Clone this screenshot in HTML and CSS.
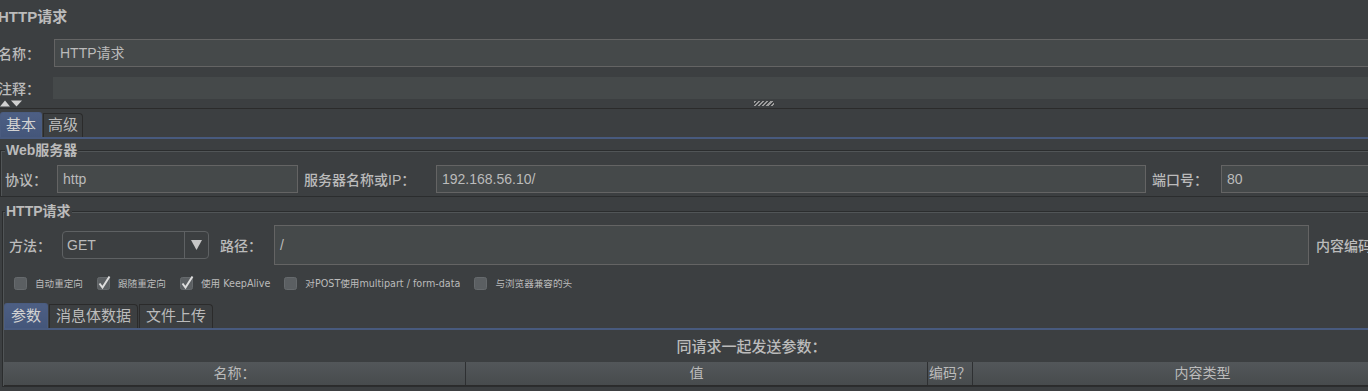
FILE: index.html
```html
<!DOCTYPE html>
<html lang="zh-CN">
<head>
    <meta charset="UTF-8">
    <title>HTTP请求</title>
    <link rel="stylesheet" href="styles.css">
</head>
<body>
<div class="app">
    <div class="page-title">HTTP请求</div>

    <div class="meta-row name-row">
        <label class="meta-label">名称：</label>
        <div class="field">HTTP请求</div>
    </div>
    <div class="meta-row comment-row">
        <label class="meta-label">注释：</label>
        <div class="comment-area"></div>
    </div>

    <!-- collapse arrows + splitter grip -->
    <div class="splitter">
        <svg class="collapse-arrows" width="22" height="7" viewBox="0 0 22 7">
            <polygon points="0,6.5 5,0.5 10,6.5" fill="#d0d0d0"/>
            <polygon points="11,0.5 22,0.5 16.5,6.5" fill="#d0d0d0"/>
        </svg>
        <span class="grip"></span>
    </div>

    <div class="tab-bar main-tabs">
        <span class="tab active">基本</span>
        <span class="tab">高级</span>
    </div>

    <fieldset class="group web-server">
        <legend>Web服务器</legend>
        <div class="server-row">
            <label class="lbl lbl-proto">协议：</label>
            <div class="field proto">http</div>
            <label class="lbl lbl-host">服务器名称或IP：</label>
            <div class="field host">192.168.56.10/</div>
            <label class="lbl lbl-port">端口号：</label>
            <div class="field port">80</div>
        </div>
    </fieldset>

    <fieldset class="group http-req">
        <legend>HTTP请求</legend>
        <div class="request-row">
            <label class="lbl lbl-method">方法：</label>
            <div class="select">
                <span class="select-value">GET</span>
                <span class="select-arrow">
                    <svg width="11" height="10" viewBox="0 0 11 10"><polygon points="0,0 11,0 5.5,10" fill="#c6c6c6"/></svg>
                </span>
            </div>
            <label class="lbl lbl-path">路径：</label>
            <div class="field path">/</div>
            <label class="lbl lbl-enc">内容编码：</label>
            <div class="field enc"></div>
        </div>

        <div class="options">
            <span class="option">
                <svg class="check" width="13" height="13" viewBox="0 0 13 13"><rect x="0.5" y="0.5" width="12" height="12" rx="2" fill="#5b5f62" stroke="#666a6d"/></svg>
                自动重定向
            </span>
            <span class="option">
                <svg class="check" width="13" height="13" viewBox="0 0 13 13"><rect x="0.5" y="0.5" width="12" height="12" rx="2" fill="#5b5f62" stroke="#666a6d"/><path d="M2.5 6.5 L5.5 10.5 L12.5 -0.5" fill="none" stroke="#dedede" stroke-width="2"/></svg>
                跟随重定向
            </span>
            <span class="option">
                <svg class="check" width="13" height="13" viewBox="0 0 13 13"><rect x="0.5" y="0.5" width="12" height="12" rx="2" fill="#5b5f62" stroke="#666a6d"/><path d="M2.5 6.5 L5.5 10.5 L12.5 -0.5" fill="none" stroke="#dedede" stroke-width="2"/></svg>
                使用 KeepAlive
            </span>
            <span class="option">
                <svg class="check" width="13" height="13" viewBox="0 0 13 13"><rect x="0.5" y="0.5" width="12" height="12" rx="2" fill="#5b5f62" stroke="#666a6d"/></svg>
                对POST使用multipart / form-data
            </span>
            <span class="option">
                <svg class="check" width="13" height="13" viewBox="0 0 13 13"><rect x="0.5" y="0.5" width="12" height="12" rx="2" fill="#5b5f62" stroke="#666a6d"/></svg>
                与浏览器兼容的头
            </span>
        </div>

        <div class="tab-bar sub-tabs">
            <span class="tab active">参数</span>
            <span class="tab">消息体数据</span>
            <span class="tab">文件上传</span>
        </div>

        <div class="params-title">同请求一起发送参数：</div>
        <div class="table-head">
            <span class="col">名称：</span>
            <span class="col">值</span>
            <span class="col">编码？</span>
            <span class="col">内容类型</span>
        </div>
    </fieldset>
</div>
</body>
</html>
```

FILE: styles.css
```css
* {
    box-sizing: border-box;
}

body {
    margin: 0;
    background-color: #3c3f41;
    color: #bbbbbb;
    font-family: "Liberation Sans", "Noto Sans CJK SC", sans-serif;
    font-size: 14px;
    overflow: hidden;
}

.app {
    width: 1500px;
}

.page-title {
    height: 35px;
    line-height: 34px;
    margin-left: -2px;
    font-size: 15px;
    font-weight: bold;
}

/* name / comment rows */
.meta-row {
    display: flex;
    align-items: center;
}
.name-row {
    margin-top: 4px;
    height: 28px;
}
.comment-row {
    margin-top: 10px;
    height: 22px;
}
.meta-label {
    width: 54px;
    flex: none;
    text-indent: -2px;
    font-weight: 500;
}
.comment-row .meta-label {
    width: 53px;
}
.name-row .field {
    flex: 1;
}
.comment-area {
    flex: 1;
    height: 22px;
    background-color: #45494a;
}

.field {
    height: 28px;
    line-height: 26px;
    padding: 0 5px;
    background-color: #45494a;
    border: 1px solid #646464;
    white-space: nowrap;
    flex: none;
}

.splitter {
    display: flex;
    align-items: flex-start;
    height: 10px;
    border-bottom: 1px solid #2b2b2b;
}
.collapse-arrows {
    margin-top: 1px;
}
.grip {
    width: 20px;
    height: 5px;
    margin: 2px 0 0 732px;
    background: repeating-linear-gradient(135deg, #9c9c9c 0 1.5px, transparent 1.5px 3px);
}

/* tabs */
.tab-bar {
    display: flex;
    align-items: flex-end;
    height: 30px;
    border-bottom: 2px solid #485a7e;
}
.tab {
    height: 24px;
    line-height: 22px;
    padding: 0 6px;
    margin-right: 1px;
    font-size: 15px;
    border: 1px solid #2b2b2b;
    border-bottom: 0;
    border-radius: 0 4px 0 0;
    white-space: nowrap;
}
.tab.active {
    height: 25px;
    line-height: 24px;
    color: #d2d2d2;
    background: linear-gradient(#4d5f84, #44567a);
    border-color: #4a5c80;
    border-radius: 3px 3px 0 0;
}
.main-tabs .tab {
    padding: 0 4px;
}
.main-tabs .tab.active {
    padding: 0 5px;
}

/* grouped panels */
.group {
    margin: 0;
    min-width: 0;
    border: 1px solid #2b2d2e;
    box-shadow: inset 1px 1px 0 #515557;
}
.group legend {
    height: 16px;
    line-height: 16px;
    padding: 0 1px;
    font-weight: bold;
    background-color: #3c3f41;
}
.web-server {
    margin-top: 3px;
    padding: 7px 0 3px 4px;
}
.http-req {
    margin: 6px 0 0 2px;
    padding: 6px 0 0 1px;
}
.http-req legend {
    margin-left: 1px;
}

.lbl {
    flex: none;
    font-weight: 500;
    white-space: nowrap;
}

.server-row {
    display: flex;
    align-items: center;
    height: 28px;
}
.lbl-proto {
    width: 52px;
}
.proto {
    width: 241px;
}
.lbl-host {
    width: 132px;
    margin-left: 6px;
}
.host {
    width: 710px;
}
.lbl-port {
    width: 69px;
    margin-left: 6px;
}
.port {
    flex: 1;
}

.request-row {
    display: flex;
    align-items: center;
    height: 40px;
}
.lbl-method {
    width: 53px;
    margin-left: 5px;
}
.select {
    display: flex;
    width: 147px;
    height: 28px;
    border: 1px solid #5e6163;
    border-radius: 4px;
    flex: none;
}
.select-value {
    flex: 1;
    padding-left: 4px;
    line-height: 26px;
}
.select-arrow {
    display: flex;
    align-items: center;
    justify-content: center;
    width: 24px;
    border-left: 1px solid #5e6163;
}
.lbl-path {
    width: 54px;
    margin-left: 11px;
}
.path {
    width: 1035px;
    height: 40px;
    line-height: 38px;
}
.lbl-enc {
    margin-left: 7px;
}
.enc {
    flex: 1;
    margin-left: 8px;
}

/* checkboxes */
.options {
    display: flex;
    align-items: center;
    height: 20px;
    margin: 8px 0 0 10px;
    font-family: "DejaVu Sans", "Noto Sans CJK SC", sans-serif;
    font-size: 9.6px;
}
.option {
    display: flex;
    align-items: center;
    gap: 8px;
    margin-right: 14px;
    white-space: nowrap;
}
.check {
    overflow: visible;
    flex: none;
}

.sub-tabs {
    margin-top: 7px;
}

.params-title {
    height: 32px;
    line-height: 33px;
    text-align: center;
    font-size: 15px;
    font-weight: 500;
}

.table-head {
    display: grid;
    grid-template-columns: 461px 462px 45px 460px;
    height: 24px;
    background: linear-gradient(#53575a, #474b4d);
    border-bottom: 1px solid #2b2b2b;
}
.table-head .col {
    line-height: 23px;
    text-align: center;
    white-space: nowrap;
}
.table-head .col + .col {
    border-left: 1px solid #2e3032;
}
```
